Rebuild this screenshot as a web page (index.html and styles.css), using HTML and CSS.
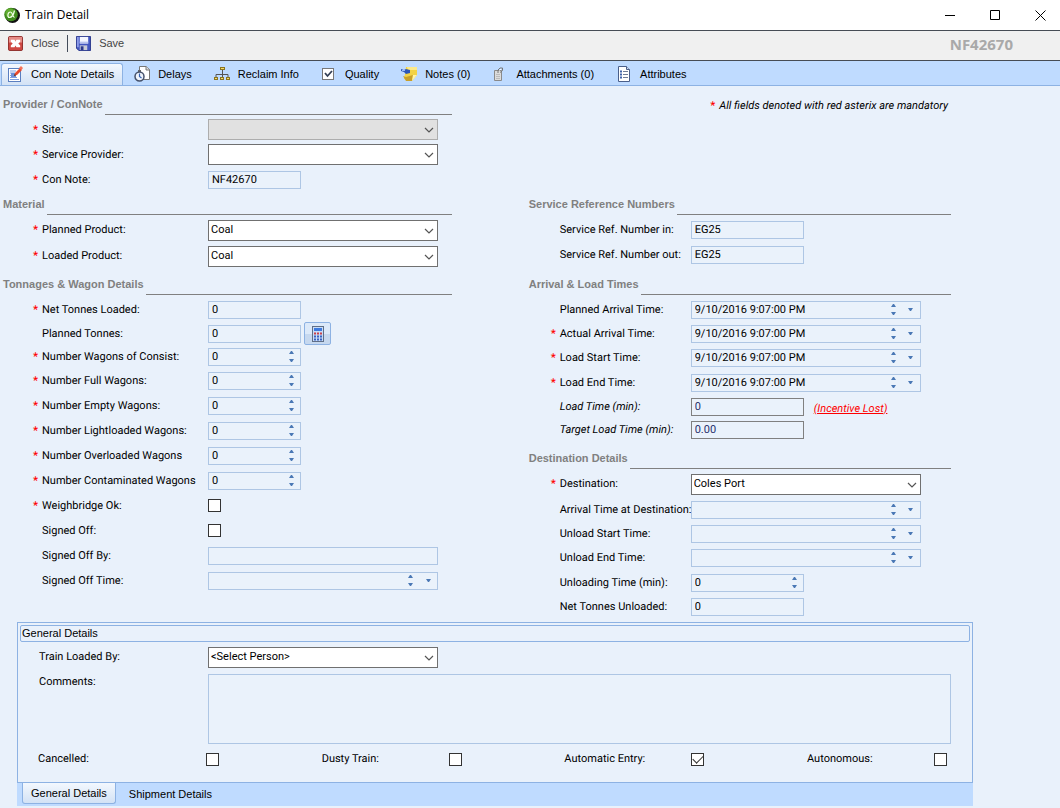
FILE: index.html
```html
<!DOCTYPE html>
<html lang="en">
<head>
    <meta charset="UTF-8">
    <meta name="viewport" content="width=device-width, initial-scale=1.0">
    <title>Train Detail</title>
    <link rel="stylesheet" href="styles.css">
</head>
<body>

    <!-- Shared glyphs -->
    <svg class="defs" aria-hidden="true">
        <symbol id="chevron" viewBox="0 0 10 6"><path d="M1 1l4 4 4-4" fill="none" stroke="#555" stroke-width="1.2"/></symbol>
        <symbol id="up" viewBox="0 0 5 3"><path d="M0 3h5L3 0H2z" fill="#4a78b5"/></symbol>
        <symbol id="down" viewBox="0 0 5 3"><path d="M0 0h5L3 3H2z" fill="#4a78b5"/></symbol>
    </svg>

    <header class="titlebar">
        <svg class="app-icon" viewBox="0 0 16 16">
            <circle cx="8.5" cy="8.5" r="7.5" fill="#111"/>
            <circle cx="7" cy="7.5" r="6.8" fill="#3f8a1c"/>
            <circle cx="6" cy="6" r="4.6" fill="#62ad31"/>
            <path d="M10.5 3.5C9.5 8 7.5 10.5 5.5 10.5C3 10.5 3.5 5 6.5 5C8.5 5 8.5 10 10.5 10.5" fill="none" stroke="#f2ffe8" stroke-width="1.2"/>
        </svg>
        <h1>Train Detail</h1>
        <div class="window-buttons">
            <button aria-label="Minimize"><svg viewBox="0 0 11 11"><path d="M0 5.5h10" stroke="#000"/></svg></button>
            <button aria-label="Maximize"><svg viewBox="0 0 11 11"><path d="M.5.5h9v9h-9z" fill="none" stroke="#000"/></svg></button>
            <button aria-label="Close window"><svg viewBox="0 0 11 11"><path d="M.5.5l10 10M10.5.5l-10 10" stroke="#000"/></svg></button>
        </div>
    </header>

    <div class="toolbar">
        <button class="tool">
            <svg viewBox="0 0 16 16">
                <rect x=".5" y=".5" width="15" height="15" rx="1.5" fill="#cf4843" stroke="#8c2a28"/>
                <path d="M1 1h14v6H1z" fill="#e58b86"/>
                <path d="M3 4h4l1 2 1-2h4v2l-2 2 2 2v2H9L8 10l-1 2H3v-2l2-2-2-2z" fill="#fff"/>
            </svg>
            Close
        </button>
        <span class="divider"></span>
        <button class="tool">
            <svg viewBox="0 0 16 16">
                <path d="M.5.5h15v15H3L.5 13z" fill="#4356c0" stroke="#2a378c"/>
                <path d="M1 1h2v11H1z" fill="#8d9be8"/>
                <rect x="4" y="1" width="9" height="7" fill="#f4f6ff"/>
                <path d="M4 6h9v2H4z" fill="#b9c3ee"/>
                <rect x="4" y="10" width="8" height="5" fill="#c9cbd6"/>
                <rect x="5" y="11" width="3" height="4" fill="#2a378c"/>
            </svg>
            Save
        </button>
        <strong class="record">NF42670</strong>
    </div>

    <nav class="tabs">
        <button class="tab active">
            <svg viewBox="0 0 16 16">
                <rect x="1.5" y="2.5" width="12" height="13" fill="#fff" stroke="#5b7fc0"/>
                <path d="M3 5h6M3 7h5M3 9.5h2M3 11.5h7M3 13.5h9" stroke="#7d9ede"/>
                <rect x="4" y="7" width="5" height="4" fill="#6a8fd8"/>
                <path d="M7 10l1-3 5-5 2 2-5 5z" fill="#e8492c"/>
                <path d="M12 2l2-2 2 2-1.5 2z" fill="#f4745c"/>
                <path d="M7 10l.7-2L9 9.3z" fill="#4a2a1a"/>
            </svg>
            Con Note Details
        </button>
        <button class="tab">
            <svg viewBox="0 0 16 16">
                <path d="M5.5.5H12l3.5 3V13.5h-10z" fill="#fff" stroke="#777"/>
                <path d="M12 .5V4h3.5" fill="#ddd" stroke="#777"/>
                <rect x="4" y="4" width="3" height="2" fill="#666"/>
                <circle cx="5.5" cy="10.5" r="4.5" fill="#eef3fb" stroke="#44506a" stroke-width="1.5"/>
                <path d="M5.5 7.5v3l2 1.5" fill="none" stroke="#3560b0" stroke-width="1.2"/>
            </svg>
            Delays
        </button>
        <button class="tab">
            <svg viewBox="0 0 16 16">
                <path d="M8.5 4v7M2 11V8.5h12V11" fill="none" stroke="#555"/>
                <g fill="#f4dc6a" stroke="#8a7320">
                    <rect x="6.5" y="1.5" width="4" height="2"/>
                    <rect x=".5" y="11.5" width="3" height="2"/>
                    <rect x="6.5" y="11.5" width="3" height="2"/>
                    <rect x="12.5" y="11.5" width="3" height="2"/>
                </g>
            </svg>
            Reclaim Info
        </button>
        <button class="tab">
            <svg viewBox="0 0 16 16">
                <rect x="1.5" y="2.5" width="11" height="11" fill="#fff" stroke="#777"/>
                <path d="M4 7l2.5 3L11 5" fill="none" stroke="#333f55" stroke-width="1.8"/>
            </svg>
            Quality
        </button>
        <button class="tab">
            <svg viewBox="0 0 16 16">
                <path d="M5 1h11v8l-5 6-8-2 1-5z" fill="#f3d345"/>
                <path d="M6 1h10v3H7z" fill="#fbe98a"/>
                <path d="M2 10l3 1 7-2-1 6H5z" fill="#c9a02a"/>
                <path d="M16 9l-5 6 1-6z" fill="#fff3a8"/>
                <path d="M0 3l3 1 2-1 4 1v3L5 8 3 6 0 5z" fill="#2d56b8"/>
                <path d="M1 4h3v1H1z" fill="#9dbcf2"/>
            </svg>
            Notes (0)
        </button>
        <button class="tab">
            <svg viewBox="0 0 16 16">
                <path d="M2.5 4.5h7v10h-7z" fill="#dcdcdc" stroke="#8a8a8a"/>
                <path d="M4 8.5h4M4 10.5h4M4 12.5h4" stroke="#bbb"/>
                <path d="M6 7V4l2-2h2.5v2.5L8 6.5" fill="none" stroke="#777"/>
                <path d="M7.5 4.5L9 3" stroke="#fff"/>
            </svg>
            Attachments (0)
        </button>
        <button class="tab">
            <svg viewBox="0 0 16 16">
                <path d="M2.5.5h8l3 3v12h-11z" fill="#fff" stroke="#4a5f8a"/>
                <path d="M10.5.5v3h3" fill="#cfdcf2" stroke="#4a5f8a"/>
                <path d="M4 5.5h2M4 8.5h2M4 11.5h2" stroke="#3f62a8" stroke-width="2"/>
                <path d="M7 5.5h5M7 8.5h5M7 11.5h5" stroke="#6e7c96"/>
            </svg>
            Attributes
        </button>
    </nav>

    <main>
        <form class="form-grid">
            <section class="left">
                <h2>Provider / ConNote</h2>
                <div class="row">
                    <label for="site"><span class="star">*</span>Site:</label>
                    <div class="select wide"><select id="site" disabled><option></option></select><svg><use href="#chevron"/></svg></div>
                </div>
                <div class="row">
                    <label for="provider"><span class="star">*</span>Service Provider:</label>
                    <div class="select wide"><select id="provider"><option></option></select><svg><use href="#chevron"/></svg></div>
                </div>
                <div class="row">
                    <label for="conNote"><span class="star">*</span>Con Note:</label>
                    <div class="box short"><input type="text" id="conNote" value="NF42670"></div>
                </div>
            </section>

            <p class="mandatory"><span class="star">*</span>All fields denoted with red asterix are mandatory</p>

            <section class="left">
                <h2>Material</h2>
                <div class="row tall">
                    <label for="plannedProduct"><span class="star">*</span>Planned Product:</label>
                    <div class="select wide"><select id="plannedProduct"><option>Coal</option></select><svg><use href="#chevron"/></svg></div>
                </div>
                <div class="row tall">
                    <label for="loadedProduct"><span class="star">*</span>Loaded Product:</label>
                    <div class="select wide"><select id="loadedProduct"><option>Coal</option></select><svg><use href="#chevron"/></svg></div>
                </div>
            </section>

            <section class="right">
                <h2>Service Reference Numbers</h2>
                <div class="row tall">
                    <label for="refIn">Service Ref. Number in:</label>
                    <div class="box medium"><input type="text" id="refIn" value="EG25"></div>
                </div>
                <div class="row tight">
                    <label for="refOut">Service Ref. Number out:</label>
                    <div class="box medium"><input type="text" id="refOut" value="EG25"></div>
                </div>
            </section>

            <section class="left">
                <h2>Tonnages &amp; Wagon Details</h2>
                <div class="row">
                    <label for="netLoaded"><span class="star">*</span>Net Tonnes Loaded:</label>
                    <div class="box short"><input type="text" id="netLoaded" value="0"></div>
                </div>
                <div class="row tight">
                    <label for="plannedTonnes">Planned Tonnes:</label>
                    <div class="box short"><input type="text" id="plannedTonnes" value="0"></div>
                    <button type="button" class="calc" aria-label="Calculate">
                        <svg viewBox="0 0 14 16">
                            <rect x="1.5" y=".5" width="11" height="15" fill="#c9dcf6" stroke="#5f6f88"/>
                            <rect x="3" y="2" width="8" height="3" fill="#3d7be0"/>
                            <path d="M3 7.5h2M6 7.5h2M9 7.5h2" stroke="#c8404a" stroke-width="2"/>
                            <path d="M3 10.5h2M6 10.5h2M9 10.5h2M3 13.5h2M6 13.5h2M9 13.5h2" stroke="#3a62c0" stroke-width="2"/>
                        </svg>
                    </button>
                </div>
                <div class="row tight">
                    <label for="consist"><span class="star">*</span>Number Wagons of Consist:</label>
                    <div class="box short"><input type="text" id="consist" value="0"><span class="spin"><button type="button" aria-label="Increase"><svg><use href="#up"/></svg></button><button type="button" aria-label="Decrease"><svg><use href="#down"/></svg></button></span></div>
                </div>
                <div class="row">
                    <label for="full"><span class="star">*</span>Number Full Wagons:</label>
                    <div class="box short"><input type="text" id="full" value="0"><span class="spin"><button type="button" aria-label="Increase"><svg><use href="#up"/></svg></button><button type="button" aria-label="Decrease"><svg><use href="#down"/></svg></button></span></div>
                </div>
                <div class="row">
                    <label for="empty"><span class="star">*</span>Number Empty Wagons:</label>
                    <div class="box short"><input type="text" id="empty" value="0"><span class="spin"><button type="button" aria-label="Increase"><svg><use href="#up"/></svg></button><button type="button" aria-label="Decrease"><svg><use href="#down"/></svg></button></span></div>
                </div>
                <div class="row">
                    <label for="light"><span class="star">*</span>Number Lightloaded Wagons:</label>
                    <div class="box short"><input type="text" id="light" value="0"><span class="spin"><button type="button" aria-label="Increase"><svg><use href="#up"/></svg></button><button type="button" aria-label="Decrease"><svg><use href="#down"/></svg></button></span></div>
                </div>
                <div class="row">
                    <label for="over"><span class="star">*</span>Number Overloaded Wagons</label>
                    <div class="box short"><input type="text" id="over" value="0"><span class="spin"><button type="button" aria-label="Increase"><svg><use href="#up"/></svg></button><button type="button" aria-label="Decrease"><svg><use href="#down"/></svg></button></span></div>
                </div>
                <div class="row">
                    <label for="contaminated"><span class="star">*</span>Number Contaminated Wagons</label>
                    <div class="box short"><input type="text" id="contaminated" value="0"><span class="spin"><button type="button" aria-label="Increase"><svg><use href="#up"/></svg></button><button type="button" aria-label="Decrease"><svg><use href="#down"/></svg></button></span></div>
                </div>
                <div class="row">
                    <label for="weighbridge"><span class="star">*</span>Weighbridge Ok:</label>
                    <input type="checkbox" id="weighbridge">
                </div>
                <div class="row">
                    <label for="signedOff">Signed Off:</label>
                    <input type="checkbox" id="signedOff">
                </div>
                <div class="row">
                    <label for="signedBy">Signed Off By:</label>
                    <div class="box wide"><input type="text" id="signedBy"></div>
                </div>
                <div class="row">
                    <label for="signedTime">Signed Off Time:</label>
                    <div class="box wide"><input type="text" id="signedTime"><span class="spin"><button type="button" aria-label="Later"><svg><use href="#up"/></svg></button><button type="button" aria-label="Earlier"><svg><use href="#down"/></svg></button></span><button type="button" class="drop" aria-label="Open calendar"><svg><use href="#down"/></svg></button></div>
                </div>
            </section>

            <div class="right stack">
                <section>
                    <h2>Arrival &amp; Load Times</h2>
                    <div class="row">
                        <label for="plannedArrival">Planned Arrival Time:</label>
                        <div class="box wide"><input type="text" id="plannedArrival" value="9/10/2016 9:07:00 PM"><span class="spin"><button type="button" aria-label="Later"><svg><use href="#up"/></svg></button><button type="button" aria-label="Earlier"><svg><use href="#down"/></svg></button></span><button type="button" class="drop" aria-label="Open calendar"><svg><use href="#down"/></svg></button></div>
                    </div>
                    <div class="row tight">
                        <label for="actualArrival"><span class="star">*</span>Actual Arrival Time:</label>
                        <div class="box wide"><input type="text" id="actualArrival" value="9/10/2016 9:07:00 PM"><span class="spin"><button type="button" aria-label="Later"><svg><use href="#up"/></svg></button><button type="button" aria-label="Earlier"><svg><use href="#down"/></svg></button></span><button type="button" class="drop" aria-label="Open calendar"><svg><use href="#down"/></svg></button></div>
                    </div>
                    <div class="row">
                        <label for="loadStart"><span class="star">*</span>Load Start Time:</label>
                        <div class="box wide"><input type="text" id="loadStart" value="9/10/2016 9:07:00 PM"><span class="spin"><button type="button" aria-label="Later"><svg><use href="#up"/></svg></button><button type="button" aria-label="Earlier"><svg><use href="#down"/></svg></button></span><button type="button" class="drop" aria-label="Open calendar"><svg><use href="#down"/></svg></button></div>
                    </div>
                    <div class="row">
                        <label for="loadEnd"><span class="star">*</span>Load End Time:</label>
                        <div class="box wide"><input type="text" id="loadEnd" value="9/10/2016 9:07:00 PM"><span class="spin"><button type="button" aria-label="Later"><svg><use href="#up"/></svg></button><button type="button" aria-label="Earlier"><svg><use href="#down"/></svg></button></span><button type="button" class="drop" aria-label="Open calendar"><svg><use href="#down"/></svg></button></div>
                    </div>
                    <div class="row tight computed">
                        <label for="loadTime">Load Time (min):</label>
                        <div class="box medium"><input type="text" id="loadTime" value="0" readonly></div>
                        <a href="#incentive" class="incentive">(Incentive Lost)</a>
                    </div>
                    <div class="row tight computed">
                        <label for="targetTime">Target Load Time (min):</label>
                        <div class="box medium"><input type="text" id="targetTime" value="0.00" readonly></div>
                    </div>
                </section>

                <section>
                    <h2>Destination Details</h2>
                    <div class="row tall">
                        <label for="destination"><span class="star">*</span>Destination:</label>
                        <div class="select wide"><select id="destination"><option>Coles Port</option></select><svg><use href="#chevron"/></svg></div>
                    </div>
                    <div class="row">
                        <label for="destArrival">Arrival Time at Destination:</label>
                        <div class="box wide"><input type="text" id="destArrival"><span class="spin"><button type="button" aria-label="Later"><svg><use href="#up"/></svg></button><button type="button" aria-label="Earlier"><svg><use href="#down"/></svg></button></span><button type="button" class="drop" aria-label="Open calendar"><svg><use href="#down"/></svg></button></div>
                    </div>
                    <div class="row tight">
                        <label for="unloadStart">Unload Start Time:</label>
                        <div class="box wide"><input type="text" id="unloadStart"><span class="spin"><button type="button" aria-label="Later"><svg><use href="#up"/></svg></button><button type="button" aria-label="Earlier"><svg><use href="#down"/></svg></button></span><button type="button" class="drop" aria-label="Open calendar"><svg><use href="#down"/></svg></button></div>
                    </div>
                    <div class="row">
                        <label for="unloadEnd">Unload End Time:</label>
                        <div class="box wide"><input type="text" id="unloadEnd"><span class="spin"><button type="button" aria-label="Later"><svg><use href="#up"/></svg></button><button type="button" aria-label="Earlier"><svg><use href="#down"/></svg></button></span><button type="button" class="drop" aria-label="Open calendar"><svg><use href="#down"/></svg></button></div>
                    </div>
                    <div class="row">
                        <label for="unloadingTime">Unloading Time (min):</label>
                        <div class="box medium"><input type="text" id="unloadingTime" value="0"><span class="spin"><button type="button" aria-label="Increase"><svg><use href="#up"/></svg></button><button type="button" aria-label="Decrease"><svg><use href="#down"/></svg></button></span></div>
                    </div>
                    <div class="row tight">
                        <label for="netUnloaded">Net Tonnes Unloaded:</label>
                        <div class="box medium"><input type="text" id="netUnloaded" value="0"></div>
                    </div>
                </section>
            </div>
        </form>

        <div class="panel">
            <div class="panel-body">
                <h3>General Details</h3>
                <div class="row tall">
                    <label for="loadedBy">Train Loaded By:</label>
                    <div class="select wide"><select id="loadedBy"><option>&lt;Select Person&gt;</option></select><svg><use href="#chevron"/></svg></div>
                </div>
                <div class="comments">
                    <label for="comments">Comments:</label>
                    <textarea id="comments"></textarea>
                </div>
                <div class="checks">
                    <div class="check"><label for="cancelled">Cancelled:</label><input type="checkbox" id="cancelled"></div>
                    <div class="check"><label for="dusty">Dusty Train:</label><input type="checkbox" id="dusty"></div>
                    <div class="check"><label for="automatic">Automatic Entry:</label><input type="checkbox" id="automatic" checked></div>
                    <div class="check"><label for="autonomous">Autonomous:</label><input type="checkbox" id="autonomous"></div>
                </div>
            </div>
            <div class="panel-tabs">
                <button class="active">General Details</button>
                <button>Shipment Details</button>
            </div>
        </div>
    </main>

</body>
</html>
```

FILE: styles.css
```css
* {
    box-sizing: border-box;
}
body {
    margin: 0;
    background-color: #e9f1fb;
    font-family: "Liberation Sans", Arial, sans-serif;
    font-size: 11px;
    line-height: 16px;
    color: #000;
}
h1, h2, h3, p {
    margin: 0;
}
button, input, select, textarea {
    font: inherit;
    color: inherit;
    margin: 0;
    padding: 0;
    border: 0;
    background: none;
}
.defs {
    display: none;
}

/* Window title */
.titlebar {
    display: flex;
    align-items: center;
    height: 30px;
    padding: 0 2px 0 4px;
    background-color: #fff;
}
.app-icon {
    width: 16px;
    height: 16px;
}
.titlebar h1 {
    flex: 1;
    margin-left: 5px;
    font: 12px/16px "Open Sans", "Noto Sans", sans-serif;
}
.window-buttons {
    display: flex;
    gap: 9px;
}
.window-buttons button {
    width: 36px;
    height: 30px;
}
.window-buttons svg {
    display: block;
    width: 11px;
    height: 11px;
    margin: auto;
}

/* Toolbar */
.toolbar {
    display: flex;
    align-items: center;
    height: 31px;
    padding: 0 47px 5px 8px;
    border-top: 1px solid #464c55;
    border-bottom: 1px solid #464c55;
    background-color: #f0f0f0;
}
.tool {
    display: flex;
    align-items: center;
    gap: 8px;
    color: #444;
}
.tool svg {
    width: 15px;
    height: 15px;
}
.divider {
    width: 1px;
    height: 17px;
    margin: 0 8px;
    background-color: #444c5a;
}
.record {
    margin-left: auto;
    padding-top: 2px;
    font: bold 15px/20px "Open Sans", "Noto Sans", sans-serif;
    color: #a9a9a9;
}

/* Main tabs */
.tabs {
    display: flex;
    align-items: flex-end;
    height: 25px;
    padding-left: 1px;
    border-bottom: 1px solid #8db2e3;
    background-color: #bfdbff;
}
.tab {
    display: flex;
    align-items: center;
    gap: 8px;
    height: 22px;
    padding: 0 10px 2px;
    border: 1px solid transparent;
    border-bottom: 0;
}
.tab svg {
    width: 16px;
    height: 16px;
}
.tab.active {
    padding: 0 8px 2px 5px;
    border-color: #8db2e3;
    border-radius: 3px 3px 0 0;
    background: linear-gradient(#f3f8fe, #d3e2f5);
}

/* Form */
.form-grid {
    display: grid;
    grid-template-columns: 17fr 16fr;
    grid-template-rows: 100px 80px auto;
    column-gap: 77px;
    padding: 10px 109px 4px 3px;
}
h2 {
    display: flex;
    height: 19px;
    margin-bottom: 2px;
    font-size: 11px;
    color: #808080;
    white-space: nowrap;
}
h2::after {
    content: "";
    flex: 1;
    margin-left: 2px;
    border-bottom: 1px solid #808080;
}
.stack {
    display: flex;
    flex-direction: column;
    gap: 9px;
}
.row, .comments, .checks, .mandatory {
    font-family: Roboto, "Liberation Sans", sans-serif;
    text-rendering: geometricPrecision;
}
.mandatory {
    justify-self: end;
    padding: 2px 3px 0 0;
    font-style: italic;
}
.star {
    display: inline-block;
    width: 9px;
    font-style: normal;
    font-weight: bold;
    color: #f00;
}
.row {
    display: flex;
    align-items: center;
    height: 25px;
}
.row.tight {
    height: 23px;
}
.row.tall {
    height: 26px;
}
.row label {
    flex: none;
    white-space: nowrap;
}
.row .star {
    margin-left: -9px;
}
.left label {
    width: 205px;
    padding-left: 39px;
}
.right label {
    width: 162px;
    padding-left: 31px;
}
.wide {
    width: 230px;
}
.medium {
    width: 113px;
}
.short {
    width: 93px;
}
.box {
    display: flex;
    height: 18px;
    border: 1px solid #aec6e4;
    background-color: #eaf2fb;
}
.box input {
    flex: 1;
    min-width: 0;
    padding-left: 3px;
    text-rendering: inherit;
}
.spin {
    display: flex;
    flex-direction: column;
    justify-content: center;
    gap: 5px;
    width: 17px;
}
.spin button {
    height: 3px;
}
.spin svg, .drop svg {
    display: block;
    width: 5px;
    height: 3px;
    margin: 0 auto;
}
.drop {
    width: 18px;
}
.select {
    position: relative;
    height: 21px;
}
.select select {
    appearance: none;
    width: 100%;
    height: 100%;
    padding: 0 20px 0 2px;
    border: 1px solid #707070;
    border-radius: 0;
    background-color: #fff;
    opacity: 1;
}
.select select:disabled {
    border-color: #adadad;
    background-color: #e1e1e1;
}
.select svg {
    position: absolute;
    top: 8px;
    right: 4px;
    width: 10px;
    height: 6px;
    pointer-events: none;
}
.computed label {
    font-style: italic;
}
.computed .box {
    border-color: #808080;
}
.computed input {
    color: #1f2f6b;
}
.incentive {
    margin-left: 10px;
    padding-top: 4px;
    font-style: italic;
    color: #f00;
}
.calc {
    width: 27px;
    height: 23px;
    margin-left: 3px;
    border: 1px solid #8db2e3;
    border-radius: 2px;
    background: linear-gradient(#dce9f9 50%, #c6d8ef 50%);
}
.calc svg {
    display: block;
    width: 14px;
    height: 16px;
    margin: 0 auto;
}
input[type="checkbox"] {
    appearance: none;
    display: grid;
    place-items: center;
    width: 13px;
    height: 13px;
    border: 1px solid #333;
    background-color: #fff;
}
input[type="checkbox"]:checked::after {
    content: "";
    width: 9px;
    height: 5px;
    margin-bottom: 3px;
    border-left: 1px solid #333;
    border-bottom: 1px solid #333;
    transform: rotate(-45deg);
}

/* General details panel */
.panel {
    margin: 0 87px 0 17px;
}
.panel-body {
    padding: 2px 2px 0;
    border: 1px solid #8db2e3;
}
h3 {
    height: 17px;
    margin-bottom: 2px;
    padding-left: 1px;
    border: 1px solid #8db2e3;
    border-radius: 2px;
    font-size: 11px;
    font-weight: normal;
    line-height: 15px;
}
.panel .row label, .comments label {
    width: 188px;
    padding-left: 19px;
}
.comments {
    display: flex;
    margin-top: 4px;
    padding-right: 19px;
}
.comments label {
    flex: none;
}
.comments textarea {
    flex: 1;
    height: 70px;
    border: 1px solid #aec6e4;
    background-color: #eaf2fb;
    resize: none;
}
.checks {
    display: flex;
    justify-content: space-between;
    padding: 7px 23px 15px 18px;
}
.check {
    display: flex;
    justify-content: space-between;
    align-items: center;
    width: 140px;
}
.check:first-child {
    width: 181px;
}
.panel-tabs {
    display: flex;
    align-items: flex-start;
    height: 23px;
    padding-left: 5px;
    background-color: #bfdbff;
}
.panel-tabs button {
    height: 21px;
    padding: 0 13px;
}
.panel-tabs .active {
    padding: 0 8px;
    border: 1px solid #8db2e3;
    border-top: 0;
    border-radius: 0 0 3px 3px;
    background: linear-gradient(#f3f8fe, #d3e2f5);
}
```
